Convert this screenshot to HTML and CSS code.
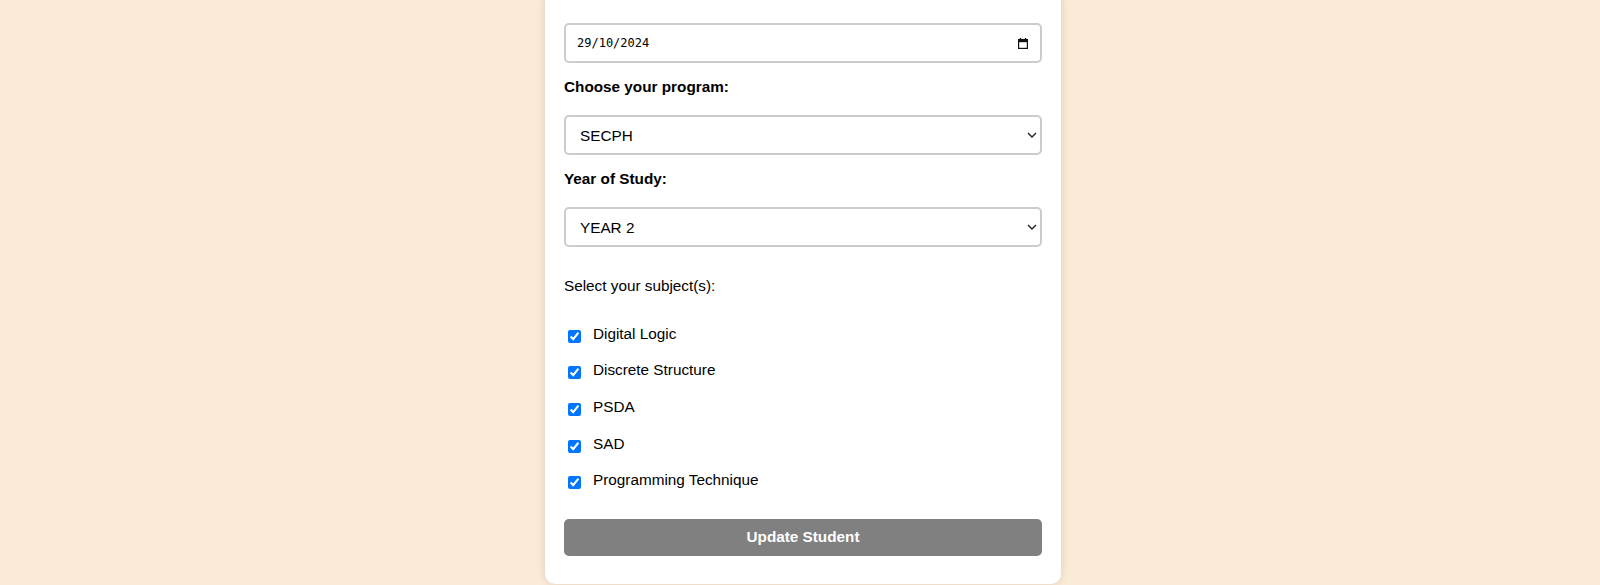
FILE: index.html
```html
<!DOCTYPE html>
<html lang="en">
<head>
<meta charset="utf-8">
<title>Update Student</title>
<link rel="stylesheet" href="styles.css">
</head>
<body>
<div class="page">
  <form class="card">
    <div class="field">
      <input class="control date-input" type="text" value="29/10/2024" readonly>
      <svg class="cal-icon" width="10" height="11" viewBox="0 0 10 11" aria-hidden="true">
        <path d="M2.5 0v2.5M7.5 0v2.5" stroke="#111" stroke-width="1.3" fill="none"/>
        <rect x="0.6" y="1.6" width="8.8" height="8.8" fill="none" stroke="#111" stroke-width="1.2"/>
        <rect x="0.6" y="1.6" width="8.8" height="2.6" fill="#111"/>
      </svg>
    </div>

    <label class="heading" for="program">Choose your program:</label>
    <div class="field">
      <select class="control select" id="program">
        <option>SECPH</option>
      </select>
      <svg class="chevron" width="10" height="6" viewBox="0 0 10 6" aria-hidden="true">
        <path d="M1 1l4 4 4-4" stroke="#222" stroke-width="1.4" fill="none"/>
      </svg>
    </div>

    <label class="heading" for="year">Year of Study:</label>
    <div class="field field-last">
      <select class="control select" id="year">
        <option>YEAR 2</option>
      </select>
      <svg class="chevron" width="10" height="6" viewBox="0 0 10 6" aria-hidden="true">
        <path d="M1 1l4 4 4-4" stroke="#222" stroke-width="1.4" fill="none"/>
      </svg>
    </div>

    <p class="subjects-title">Select your subject(s):</p>

    <div class="subjects">
      <label class="subject"><input type="checkbox" checked><span>Digital Logic</span></label>
      <label class="subject"><input type="checkbox" checked><span>Discrete Structure</span></label>
      <label class="subject"><input type="checkbox" checked><span>PSDA</span></label>
      <label class="subject"><input type="checkbox" checked><span>SAD</span></label>
      <label class="subject"><input type="checkbox" checked><span>Programming Technique</span></label>
    </div>

    <button class="submit" type="button">Update Student</button>
  </form>
</div>
</body>
</html>
```

FILE: styles.css
```css
html, body {
  margin: 0;
  padding: 0;
  height: 100%;
  overflow: hidden;
  background: #faebd7;
  font-family: "Liberation Sans", Arial, sans-serif;
  font-size: 15.3px;
  color: #000;
}

.page {
  display: flex;
  justify-content: center;
  padding-left: 6px;
}

.card {
  width: 516px;
  box-sizing: border-box;
  margin-top: -12px;
  padding: 35px 19px 28px;
  background: #fff;
  border-radius: 10px;
  box-shadow: 0 0 10px rgba(0, 0, 0, 0.12);
  display: flex;
  flex-direction: column;
}

.field {
  position: relative;
  margin-bottom: 15px;
}

.field-last {
  margin-bottom: 30px;
}

.control {
  display: block;
  width: 100%;
  height: 40px;
  box-sizing: border-box;
  border: 2px solid #cccccc;
  border-radius: 5px;
  background: #fff;
  color: #000;
  margin: 0;
  outline: none;
}

.date-input {
  padding: 0 11px;
  font-family: "DejaVu Sans Mono", "Liberation Mono", monospace;
  font-size: 12px;
}

.cal-icon {
  position: absolute;
  right: 14px;
  top: 15px;
}

.select {
  appearance: none;
  -webkit-appearance: none;
  padding: 0 14px;
  font-family: "Liberation Sans", Arial, sans-serif;
  font-size: 15.3px;
}

.chevron {
  position: absolute;
  right: 5px;
  top: 17px;
  pointer-events: none;
}

.heading {
  display: block;
  font-weight: bold;
  line-height: 17px;
  margin-bottom: 20px;
}

.subjects-title {
  margin: 0 0 32px;
  line-height: 17px;
}

.subjects {
  display: flex;
  flex-direction: column;
  gap: 16.7px;
}

.subject {
  display: flex;
  align-items: center;
  height: 20px;
}

.subject input {
  width: 13px;
  height: 13px;
  margin: 0 0 0 4px;
  accent-color: #0075ff;
}

.subject span {
  margin-left: 12px;
  line-height: 17px;
  margin-bottom: 6px;
}

.submit {
  margin-top: 26px;
  height: 37px;
  width: 100%;
  border: none;
  border-radius: 5px;
  background: #808080;
  color: #fff;
  font-family: "Liberation Sans", Arial, sans-serif;
  font-size: 15.3px;
  font-weight: bold;
  padding: 0;
}
```
